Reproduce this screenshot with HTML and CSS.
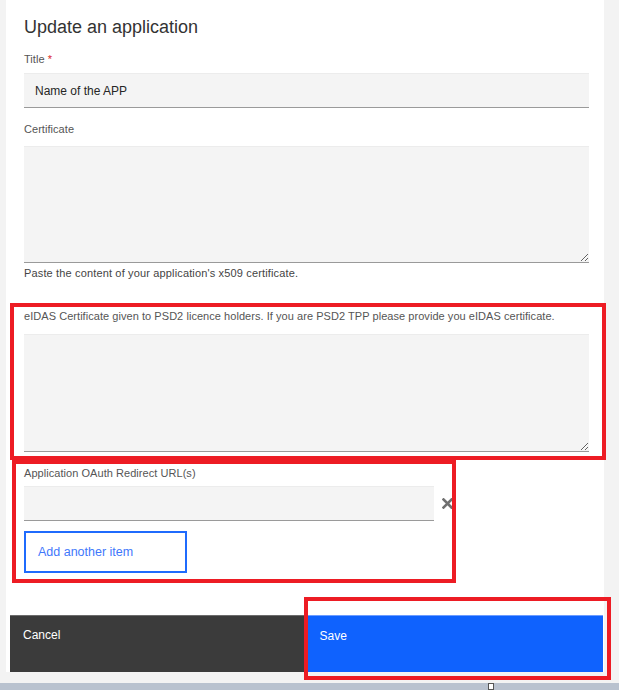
FILE: index.html
```html
<!DOCTYPE html>
<html lang="en">
<head>
  <meta charset="UTF-8">
  <title>Update an application</title>
  <link rel="stylesheet" href="styles.css">
</head>
<body>

  <div class="page">
    <div class="modal">
      <div class="modal-body">
        <h2 class="modal-title">Update an application</h2>

        <div class="field field-title">
          <label class="label" for="title">Title <span class="req">*</span></label>
          <input class="input" type="text" id="title" value="Name of the APP">
        </div>

        <div class="field field-cert">
          <label class="label" for="cert">Certificate</label>
          <textarea class="textarea" id="cert"></textarea>
          <div class="helper">Paste the content of your application's x509 certificate.</div>
        </div>

        <div class="field field-eidas">
          <label class="label" for="eidas">eIDAS Certificate given to PSD2 licence holders. If you are PSD2 TPP please provide you eIDAS certificate.</label>
          <textarea class="textarea tall" id="eidas"></textarea>
        </div>

        <div class="field field-oauth">
          <label class="label" for="redirect">Application OAuth Redirect URL(s)</label>
          <div class="url-row">
            <input class="input url" type="text" id="redirect">
            <span class="remove" title="Remove">
              <svg width="11" height="11" viewBox="0 0 11 11">
                <path d="M1.5 1.5 L9.5 9.5 M9.5 1.5 L1.5 9.5" stroke="#707070" stroke-width="2.6" stroke-linecap="square"/>
              </svg>
            </span>
          </div>
          <button class="btn-add" type="button">Add another item</button>
        </div>
      </div>

      <div class="modal-footer">
        <button class="btn btn-cancel" type="button">Cancel</button>
        <button class="btn btn-save" type="button">Save</button>
      </div>
    </div>
  </div>

  <div class="hscroll"><span class="hscroll-grip"></span></div>

  <!-- annotation boxes drawn over the form -->
  <div class="mark mark-eidas"></div>
  <div class="mark mark-oauth"></div>
  <div class="mark mark-save"></div>

</body>
</html>
```

FILE: styles.css
```css
body {
  margin: 0;
  height: 690px;
  overflow: hidden;
  background: #f3f3f3;
  font-family: "Liberation Sans", Arial, sans-serif;
  color: #161616;
  position: relative;
}
.page {
  padding-left: 6px;
}
.modal {
  width: 598px;
  height: 672px;
  background: #fff;
  display: flex;
  flex-direction: column;
}
.modal-body {
  padding: 15px 15px 0 18px;
  flex: 1;
}
.modal-title {
  margin: 0;
  font-size: 18px;
  font-weight: normal;
  line-height: 24px;
  color: #333;
}
.field {
  display: flex;
  flex-direction: column;
}
.label {
  font-size: 11px;
  line-height: 14px;
  color: #555;
  letter-spacing: 0.05px;
}
.req {
  color: #da1e28;
}
.input, .textarea {
  box-sizing: border-box;
  border: none;
  border-top: 1px solid #ececec;
  border-bottom: 1px solid #9a9a9a;
  background: #f4f4f4;
  font-family: inherit;
  font-size: 12px;
  color: #262626;
  margin: 0;
}
.input {
  height: 35px;
  padding: 0 11px;
}
.textarea {
  height: 117px;
  resize: vertical;
  padding: 8px 11px;
}
.textarea.tall {
  height: 118px;
}
.field-title {
  margin-top: 13px;
}
.field-title .input {
  margin-top: 7px;
}
.field-cert {
  margin-top: 14px;
}
.field-cert .textarea {
  margin-top: 10px;
}
.helper {
  margin-top: 3px;
  font-size: 11px;
  line-height: 14px;
  color: #444;
  letter-spacing: 0.15px;
}
.field-eidas {
  margin-top: 29px;
}
.field-eidas .textarea {
  margin-top: 11px;
}
.field-oauth {
  margin-top: 14px;
  align-items: flex-start;
}
.url-row {
  margin-top: 6px;
  display: flex;
  align-items: center;
  gap: 8px;
}
.input.url {
  width: 410px;
}
.remove {
  display: flex;
  width: 11px;
  height: 11px;
}
.btn-add {
  margin-top: 10px;
  box-sizing: border-box;
  width: 163px;
  height: 42px;
  padding: 0 12px;
  text-align: left;
  background: #fff;
  border: 2px solid #1f6bfd;
  color: #3f78fb;
  font-family: inherit;
  font-size: 12.5px;
}
.modal-footer {
  display: flex;
  height: 57px;
  margin: 0 1px 0 4px;
}
.btn {
  flex: 1;
  border: none;
  text-align: left;
  font-family: inherit;
  font-size: 12px;
  line-height: 14px;
  color: #fff;
  display: flex;
  align-items: flex-start;
}
.btn-cancel {
  background: #3b3b3b;
  border-top: 1px solid #6c6c6c;
  padding: 12px 13px 0;
}
.btn-save {
  background: #0f62fe;
  border-top: 1px solid #6c9cff;
  padding: 13px 15px 0;
}
.hscroll {
  position: absolute;
  left: 0;
  right: 0;
  top: 683px;
  height: 7px;
  background: #b9c2cf;
}
.hscroll-grip {
  position: absolute;
  left: 488px;
  top: 0;
  width: 4px;
  height: 5px;
  background: #fff;
  border: 1px solid #555;
}
.mark {
  position: absolute;
  box-sizing: border-box;
  border: 4px solid #ed1c24;
}
.mark-eidas {
  left: 10px;
  top: 303px;
  width: 596px;
  height: 157px;
}
.mark-oauth {
  left: 12px;
  top: 460px;
  width: 444px;
  height: 123px;
}
.mark-save {
  left: 304px;
  top: 597px;
  width: 307px;
  height: 83px;
}
```
